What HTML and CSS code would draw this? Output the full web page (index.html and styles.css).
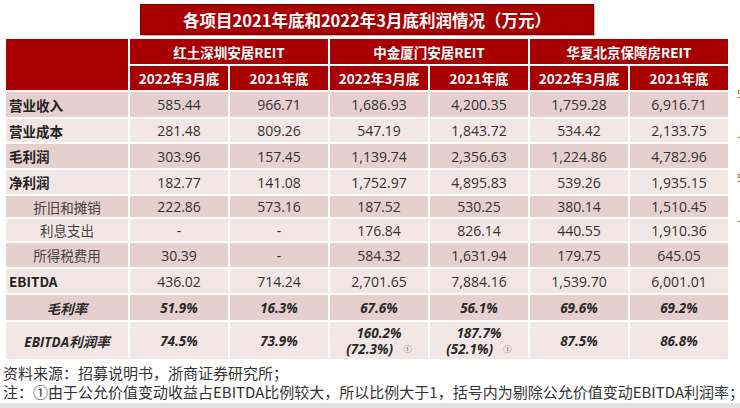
FILE: index.html
```html
<!DOCTYPE html>
<html lang="zh-CN">
<head>
<meta charset="utf-8">
<link rel="stylesheet" href="styles.css">
</head>
<body>
<div class="page">
  <div class="title-row">
    <div class="title">各项目2021年底和2022年3月底利润情况（万元）</div>
  </div>
  <div class="table-row">
    <div class="grid">
      <div class="h corner"></div>
      <div class="h grp">红土深圳安居REIT</div>
      <div class="h grp">中金厦门安居REIT</div>
      <div class="h grp">华夏北京保障房REIT</div>
      <div class="h">2022年3月底</div>
      <div class="h">2021年底</div>
      <div class="h">2022年3月底</div>
      <div class="h">2021年底</div>
      <div class="h">2022年3月底</div>
      <div class="h">2021年底</div>

      <div class="c dk lb">营业收入</div>
      <div class="c dk">585.44</div><div class="c dk">966.71</div><div class="c dk">1,686.93</div><div class="c dk">4,200.35</div><div class="c dk">1,759.28</div><div class="c dk">6,916.71</div>

      <div class="c lt lb">营业成本</div>
      <div class="c lt">281.48</div><div class="c lt">809.26</div><div class="c lt">547.19</div><div class="c lt">1,843.72</div><div class="c lt">534.42</div><div class="c lt">2,133.75</div>

      <div class="c dk lb">毛利润</div>
      <div class="c dk">303.96</div><div class="c dk">157.45</div><div class="c dk">1,139.74</div><div class="c dk">2,356.63</div><div class="c dk">1,224.86</div><div class="c dk">4,782.96</div>

      <div class="c lt lb">净利润</div>
      <div class="c lt">182.77</div><div class="c lt">141.08</div><div class="c lt">1,752.97</div><div class="c lt">4,895.83</div><div class="c lt">539.26</div><div class="c lt">1,935.15</div>

      <div class="c dk sub">折旧和摊销</div>
      <div class="c dk">222.86</div><div class="c dk">573.16</div><div class="c dk">187.52</div><div class="c dk">530.25</div><div class="c dk">380.14</div><div class="c dk">1,510.45</div>

      <div class="c lt sub">利息支出</div>
      <div class="c lt">-</div><div class="c lt">-</div><div class="c lt">176.84</div><div class="c lt">826.14</div><div class="c lt">440.55</div><div class="c lt">1,910.36</div>

      <div class="c dk sub">所得税费用</div>
      <div class="c dk">30.39</div><div class="c dk">-</div><div class="c dk">584.32</div><div class="c dk">1,631.94</div><div class="c dk">179.75</div><div class="c dk">645.05</div>

      <div class="c lt lb">EBITDA</div>
      <div class="c lt">436.02</div><div class="c lt">714.24</div><div class="c lt">2,701.65</div><div class="c lt">7,884.16</div><div class="c lt">1,539.70</div><div class="c lt">6,001.01</div>

      <div class="c dk bi">毛利率</div>
      <div class="c dk bi">51.9%</div><div class="c dk bi">16.3%</div><div class="c dk bi">67.6%</div><div class="c dk bi">56.1%</div><div class="c dk bi">69.6%</div><div class="c dk bi">69.2%</div>

      <div class="c lt bi">EBITDA利润率</div>
      <div class="c lt bi">74.5%</div><div class="c lt bi">73.9%</div>
      <div class="c lt bi two"><span>160.2%</span><span>(72.3%)<sup class="note">①</sup></span></div>
      <div class="c lt bi two"><span>187.7%</span><span>(52.1%)<sup class="note">①</sup></span></div>
      <div class="c lt bi">87.5%</div><div class="c lt bi">86.8%</div>
    </div>
    <div class="edge">
      <span>5</span>
      <span>-</span>
      <span>5</span>
      <span>-</span>
    </div>
  </div>
  <div class="foot">
    <p>资料来源：招募说明书，浙商证券研究所；</p>
    <p>注：①由于公允价值变动收益占EBITDA比例较大，所以比例大于1，括号内为剔除公允价值变动EBITDA利润率；</p>
  </div>
  <div class="bar"></div>
</div>
</body>
</html>
```

FILE: styles.css
```css
* { box-sizing: border-box; }
html, body {
  margin: 0;
  padding: 0;
  background: #ffffff;
  width: 740px;
  height: 408px;
  overflow: hidden;
  font-family: "Open Sans", "Noto Sans CJK SC", sans-serif;
  color: #333333;
}
.page {
  display: flex;
  flex-direction: column;
  height: 408px;
}
.title-row {
  padding: 4px 0 0 140px;
}
.title {
  width: 454px;
  height: 31px;
  background: #a80000;
  border: 1px solid #7a0000;
  box-shadow: 1px 1px 1px rgba(0,0,0,0.25);
  color: #ffffff;
  font-family: "Noto Sans CJK SC", sans-serif;
  font-weight: 700;
  font-size: 16.5px;
  display: flex;
  align-items: center;
  justify-content: center;
  text-spacing-trim: space-all;
}
.table-row {
  display: flex;
  padding: 4px 0 0 6px;
}
.grid {
  display: grid;
  grid-template-columns: 122px repeat(6, 98px);
  grid-template-rows: 25px 24px 25px 23px 24px 24px 21px 22px 24px 24px 25px 37px;
  column-gap: 2px;
  row-gap: 2px;
}
.h {
  background: #a80000;
  color: #ffffff;
  font-weight: 700;
  font-size: 13.5px;
  font-family: "Noto Sans CJK SC", sans-serif;
  display: flex;
  align-items: center;
  justify-content: center;
}
.corner { grid-row: span 2; }
.grp { grid-column: span 2; }
.c {
  display: flex;
  align-items: center;
  justify-content: center;
  font-size: 14px;
  color: #333333;
}
.dk { background: #e6cfcf; }
.lt { background: #f3e6e6; }
.lb {
  justify-content: flex-start;
  padding-left: 3px;
  font-weight: 700;
  font-size: 13.5px;
  font-family: "Noto Sans CJK SC", sans-serif;
  color: #222222;
}
.sub {
  font-size: 13.5px;
  font-family: "Noto Sans CJK SC", sans-serif;
  color: #444444;
}
.bi {
  font-weight: 700;
  font-style: italic;
  font-size: 13.5px;
  color: #2a2a2a;
}
.two {
  flex-direction: column;
  line-height: 16px;
}
.note {
  font-size: 8.5px;
  font-style: normal;
  font-weight: 400;
  color: #666666;
  margin-left: 10px;
  vertical-align: 2px;
}
.edge {
  width: 3px;
  margin-left: 9px;
  overflow: hidden;
  display: flex;
  flex-direction: column;
  font-size: 11px;
  color: #7a6a3a;
  padding-top: 49px;
}
.edge span { display: block; height: 42px; line-height: 11px; }
.foot {
  padding: 4px 0 0 3px;
  font-family: "Noto Sans CJK SC", sans-serif;
  font-size: 15px;
  color: #333333;
  text-spacing-trim: space-all;
}
.foot p {
  margin: 0;
  line-height: 19px;
  white-space: nowrap;
}
.bar {
  margin-top: auto;
  height: 5px;
  background: #e2e2e2;
}
```
